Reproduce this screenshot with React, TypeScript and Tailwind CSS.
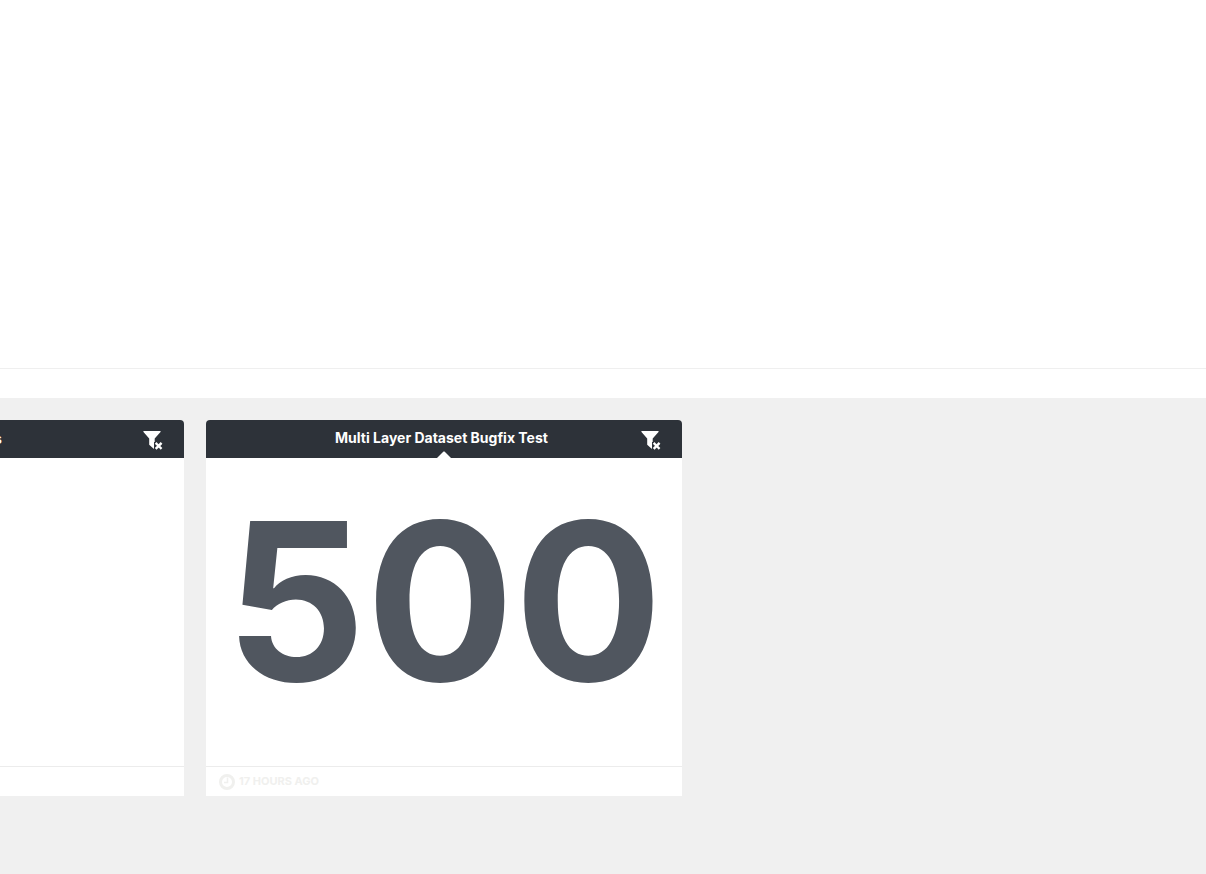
import type { ReactNode } from "react";

const FilterClearIcon = () => (
  <svg viewBox="0 0 20 20" className="h-5 w-5" aria-hidden="true">
    <path
      d="M.9 1h16.200c.5 0 .7.5.4.9L11.700 8.400V18c0 .9-.8 1-1.300.5L6.200 14.800V8.400L.5 1.900C.2 1.500.4 1 .9 1Z"
      fill="#fff"
    />
    <path d="M11 12h8.500v8H11Z" fill="#2d3239" />
    <path
      d="m13.500 13.800 4.200 4.200m0-4.200-4.200 4.200"
      stroke="#fff"
      strokeWidth="2.400"
      strokeLinecap="square"
    />
  </svg>
);

const ClockIcon = () => (
  <svg viewBox="0 0 16 16" className="h-4 w-4" fill="none" stroke="currentColor" aria-hidden="true">
    <circle cx="8" cy="8" r="6.500" strokeWidth="3" />
    <path d="M8.500 3.500v5H5" strokeWidth="1.500" />
  </svg>
);

type CardProps = {
  children?: ReactNode;
  className: string;
  header: ReactNode;
  footer?: ReactNode;
};

const Card = ({ children, className, header, footer }: CardProps) => (
  <article className={`flex flex-none flex-col bg-white ${className}`}>
    <header className="relative flex h-[38px] items-center bg-[#2d3239] pr-[21px] text-white">
      {header}
      <button type="button" aria-label="Clear filters" className="flex-none pt-0.5">
        <FilterClearIcon />
      </button>
    </header>
    <div className="flex h-[308px] items-center justify-center pb-[22px]">{children}</div>
    <footer className="flex h-[30px] items-center gap-1 border-t border-[#ececec] px-[13px] text-[#f0f0ee]">
      {footer}
    </footer>
  </article>
);

const App = () => {
  return (
    <div className="min-h-screen overflow-x-hidden bg-[#f0f0f0] font-['Inter',sans-serif]">
      <div className="bg-white">
        <div className="h-[369px] border-b border-[#efefef]" />
        <div className="h-[29px]" />
      </div>

      <main className="flex gap-[22px] pt-[22px] pb-10">
        <Card
          className="w-[184px] overflow-hidden rounded-tr"
          header={<h2 className="-ml-1.5 flex-1 text-sm font-bold">s</h2>}
        />

        <Card
          className="w-[476px] overflow-hidden rounded-t"
          header={
            <>
              <h2 className="flex-1 pb-0.5 pl-9 text-center text-sm font-bold whitespace-nowrap">
                Multi Layer Dataset Bugfix Test
              </h2>
              {/* Pointer from the header into the card body */}
              <svg
                viewBox="0 0 14 7"
                className="absolute bottom-0 left-1/2 h-[7px] w-[14px] -translate-x-1/2"
                aria-hidden="true"
              >
                <path d="M0 7 6.500.500h1L14 7Z" fill="#fff" />
              </svg>
            </>
          }
          footer={
            <>
              <ClockIcon />
              <span className="text-[11px] font-bold">17 HOURS AGO</span>
            </>
          }
        >
          <span className="text-[220px] leading-none font-bold text-[#50565f]">500</span>
        </Card>
      </main>
    </div>
  );
};

export default App;
